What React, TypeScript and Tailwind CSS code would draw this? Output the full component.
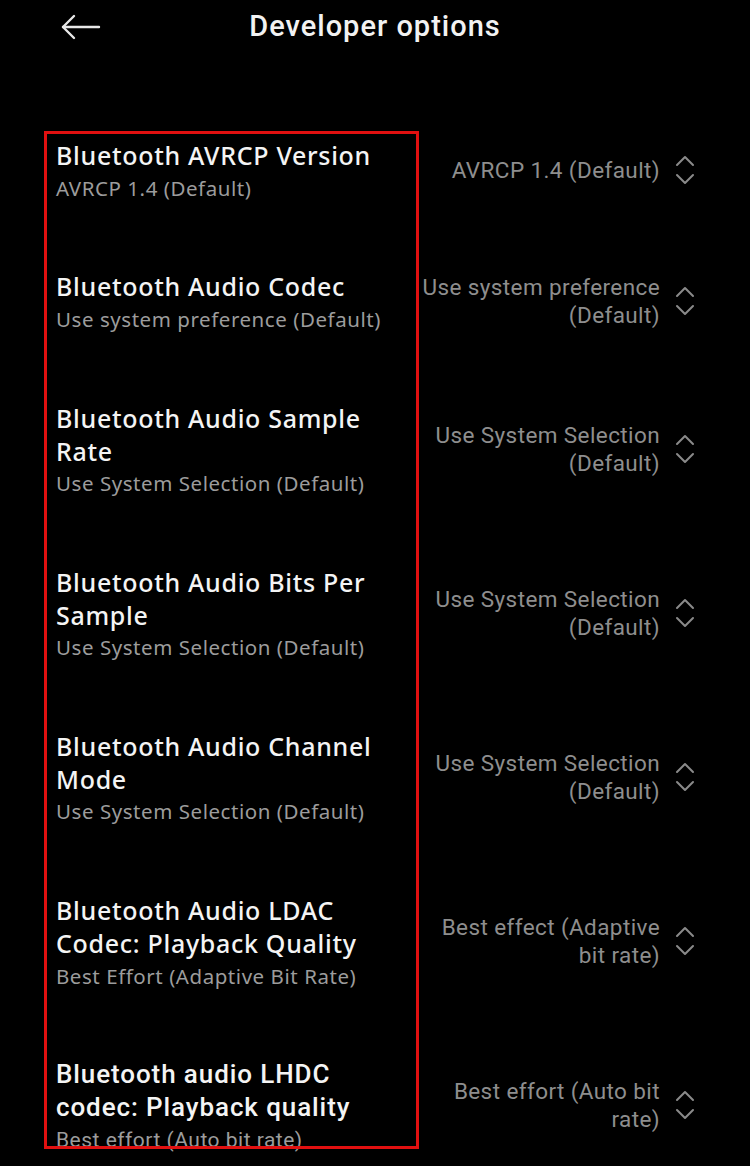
import React from "react"

type Item = {
    title: string
    sub: string
    value: string[]
    roboto?: boolean
}

const items: Item[] = [
    { title: "Bluetooth AVRCP Version", sub: "AVRCP 1.4 (Default)", value: ["AVRCP 1.4 (Default)"] },
    { title: "Bluetooth Audio Codec", sub: "Use system preference (Default)", value: ["Use system preference", "(Default)"] },
    { title: "Bluetooth Audio Sample Rate", sub: "Use System Selection (Default)", value: ["Use System Selection", "(Default)"] },
    { title: "Bluetooth Audio Bits Per Sample", sub: "Use System Selection (Default)", value: ["Use System Selection", "(Default)"] },
    { title: "Bluetooth Audio Channel Mode", sub: "Use System Selection (Default)", value: ["Use System Selection", "(Default)"] },
    { title: "Bluetooth Audio LDAC Codec: Playback Quality", sub: "Best Effort (Adaptive Bit Rate)", value: ["Best effect (Adaptive", "bit rate)"] },
    { title: "Bluetooth audio LHDC codec: Playback quality", sub: "Best effort (Auto bit rate)", value: ["Best effort (Auto bit", "rate)"], roboto: true },
]

function Chevrons() {
    return (
        <svg width="20" height="30" viewBox="0 0 20 30" fill="none" stroke="#8a8a8a" strokeWidth="2" strokeLinecap="round" strokeLinejoin="round">
            <path d="M2 10 L10 2 L18 10" />
            <path d="M2 20 L10 28 L18 20" />
        </svg>
    )
}

export default function App() {
    return (
        <div className="w-[750px] min-h-[1166px] bg-black text-white overflow-hidden" style={{ fontFamily: "Roboto, sans-serif" }}>
            {/* Header */}
            <div className="h-[54px] flex items-center relative">
                <svg className="ml-[61px]" width="40" height="26" viewBox="0 0 40 26" fill="none" stroke="#e8e8e8" strokeWidth="2.4" strokeLinecap="round" strokeLinejoin="round">
                    <path d="M38 13 H2" />
                    <path d="M13 2 L2 13 L13 24" />
                </svg>
                <div className="absolute left-0 right-0 text-center text-[29px] tracking-[1px] font-medium text-[#f2f2f2] font-['Roboto'] pointer-events-none">
                    Developer options
                </div>
            </div>

            {/* List */}
            <div className="relative mt-[52px]">
                {items.map((it) => (
                    <div key={it.title} className="flex items-center py-[33px]">
                        <div className="pl-[56px] w-[405px]">
                            <div
                                className={`${it.roboto ? "font-['Roboto'] text-[26px] tracking-[0.9px]" : "font-['Noto_Sans'] text-[25px] tracking-[0.7px]"} font-medium leading-[32.7px] text-[#f4f4f4] w-[340px]`}
                            >
                                {it.title}
                            </div>
                            <div
                                className={`${it.roboto ? "font-['Roboto'] text-[21px] tracking-[0.5px]" : "font-['Noto_Sans'] text-[20.5px] tracking-[0.55px]"} leading-[32.7px] text-[#9c9c9c] whitespace-nowrap`}
                            >
                                {it.sub}
                            </div>
                        </div>
                        <div className="flex-1 flex items-center justify-end pr-[55px] pb-[4px] gap-[15px]">
                            <div className="text-right text-[22.5px] tracking-[0.4px] leading-[28px] text-[#8e8e8e] font-['Roboto'] whitespace-nowrap">
                                {it.value.map((v) => (
                                    <div key={v}>{v}</div>
                                ))}
                            </div>
                            <Chevrons />
                        </div>
                    </div>
                ))}
                {/* highlight annotation */}
                <div className="absolute left-[44px] top-[25px] w-[375px] h-[1018px] border-[3px] border-[#e01010] pointer-events-none" />
            </div>
        </div>
    )
}
